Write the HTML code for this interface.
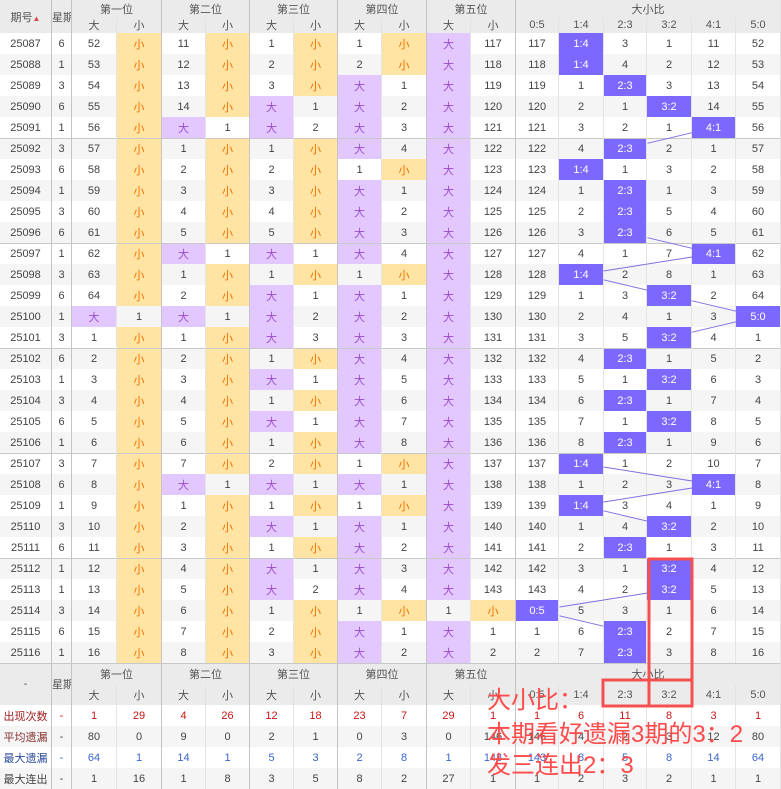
<!DOCTYPE html>
<html><head><meta charset="utf-8">
<style>
html,body{margin:0;padding:0;background:#fff;width:781px;height:789px;overflow:hidden;position:relative}
table{border-collapse:separate;border-spacing:0;table-layout:fixed;width:781px;font-family:"Liberation Sans","Noto Sans CJK SC",sans-serif;font-size:11px;color:#444}
td{padding:0;text-align:center;height:21px;box-sizing:border-box;border-right:1px solid #e4e4e4;white-space:nowrap;overflow:hidden}
tr.e td{background:#f5f5f5}
tr.g td{box-shadow:inset 0 1px 0 #c8c8c8}
td.L{border-right:1px solid #c4c4c4}
td.s{background:#ffe4a3!important;color:#f07000}
td.b{background:#e2c8ff!important;color:#9a4cd0}
td.r{background:#7b68ff!important;color:#fff}
tr.h td{background:#ebebeb;color:#555}
tr.h1 td{height:17px;font-size:11px}
tr.h2 td{height:16px}
tr.f1 td{height:21px}
tr.f2 td{height:21px}
.red td{color:#c81818}
.red td.lab{color:#a02020}
.blu td{color:#3a66cc}
.blu td.lab{color:#2a4a9a}
.avg td.lab{color:#833}
#ov{position:absolute;left:0;top:0;width:781px;height:789px;pointer-events:none}
.ann{position:absolute;left:487px;color:#ff4b4b;font-family:"Liberation Sans","Noto Sans CJK SC",sans-serif;font-size:24px;line-height:31px;white-space:nowrap}
</style></head><body>
<table>
<colgroup><col style="width:52px"><col style="width:20px"><col style="width:45px"><col style="width:45px"><col style="width:44px"><col style="width:44px"><col style="width:44px"><col style="width:44px"><col style="width:44px"><col style="width:45px"><col style="width:44px"><col style="width:45px"><col style="width:43px"><col style="width:45px"><col style="width:43px"><col style="width:45px"><col style="width:44px"><col style="width:45px"></colgroup>
<tr class="h h1"><td rowspan="2" class="L">期号<span style="color:#d44;font-size:8px">▲</span></td><td rowspan="2" class="L">星期</td><td colspan="2" class="L">第一位</td><td colspan="2" class="L">第二位</td><td colspan="2" class="L">第三位</td><td colspan="2" class="L">第四位</td><td colspan="2" class="L">第五位</td><td colspan="6">大小比</td></tr>
<tr class="h h2"><td>大</td><td class="L">小</td><td>大</td><td class="L">小</td><td>大</td><td class="L">小</td><td>大</td><td class="L">小</td><td>大</td><td class="L">小</td><td>0:5</td><td>1:4</td><td>2:3</td><td>3:2</td><td>4:1</td><td>5:0</td></tr>
<tr><td class="L">25087</td><td class="L">6</td><td>52</td><td class="s L">小</td><td>11</td><td class="s L">小</td><td>1</td><td class="s L">小</td><td>1</td><td class="s L">小</td><td class="b">大</td><td class="L">117</td><td>117</td><td class="r">1:4</td><td>3</td><td>1</td><td>11</td><td>52</td></tr>
<tr class="e"><td class="L">25088</td><td class="L">1</td><td>53</td><td class="s L">小</td><td>12</td><td class="s L">小</td><td>2</td><td class="s L">小</td><td>2</td><td class="s L">小</td><td class="b">大</td><td class="L">118</td><td>118</td><td class="r">1:4</td><td>4</td><td>2</td><td>12</td><td>53</td></tr>
<tr><td class="L">25089</td><td class="L">3</td><td>54</td><td class="s L">小</td><td>13</td><td class="s L">小</td><td>3</td><td class="s L">小</td><td class="b">大</td><td class="L">1</td><td class="b">大</td><td class="L">119</td><td>119</td><td>1</td><td class="r">2:3</td><td>3</td><td>13</td><td>54</td></tr>
<tr class="e"><td class="L">25090</td><td class="L">6</td><td>55</td><td class="s L">小</td><td>14</td><td class="s L">小</td><td class="b">大</td><td class="L">1</td><td class="b">大</td><td class="L">2</td><td class="b">大</td><td class="L">120</td><td>120</td><td>2</td><td>1</td><td class="r">3:2</td><td>14</td><td>55</td></tr>
<tr><td class="L">25091</td><td class="L">1</td><td>56</td><td class="s L">小</td><td class="b">大</td><td class="L">1</td><td class="b">大</td><td class="L">2</td><td class="b">大</td><td class="L">3</td><td class="b">大</td><td class="L">121</td><td>121</td><td>3</td><td>2</td><td>1</td><td class="r">4:1</td><td>56</td></tr>
<tr class="e g"><td class="L">25092</td><td class="L">3</td><td>57</td><td class="s L">小</td><td>1</td><td class="s L">小</td><td>1</td><td class="s L">小</td><td class="b">大</td><td class="L">4</td><td class="b">大</td><td class="L">122</td><td>122</td><td>4</td><td class="r">2:3</td><td>2</td><td>1</td><td>57</td></tr>
<tr><td class="L">25093</td><td class="L">6</td><td>58</td><td class="s L">小</td><td>2</td><td class="s L">小</td><td>2</td><td class="s L">小</td><td>1</td><td class="s L">小</td><td class="b">大</td><td class="L">123</td><td>123</td><td class="r">1:4</td><td>1</td><td>3</td><td>2</td><td>58</td></tr>
<tr class="e"><td class="L">25094</td><td class="L">1</td><td>59</td><td class="s L">小</td><td>3</td><td class="s L">小</td><td>3</td><td class="s L">小</td><td class="b">大</td><td class="L">1</td><td class="b">大</td><td class="L">124</td><td>124</td><td>1</td><td class="r">2:3</td><td>1</td><td>3</td><td>59</td></tr>
<tr><td class="L">25095</td><td class="L">3</td><td>60</td><td class="s L">小</td><td>4</td><td class="s L">小</td><td>4</td><td class="s L">小</td><td class="b">大</td><td class="L">2</td><td class="b">大</td><td class="L">125</td><td>125</td><td>2</td><td class="r">2:3</td><td>5</td><td>4</td><td>60</td></tr>
<tr class="e"><td class="L">25096</td><td class="L">6</td><td>61</td><td class="s L">小</td><td>5</td><td class="s L">小</td><td>5</td><td class="s L">小</td><td class="b">大</td><td class="L">3</td><td class="b">大</td><td class="L">126</td><td>126</td><td>3</td><td class="r">2:3</td><td>6</td><td>5</td><td>61</td></tr>
<tr class="g"><td class="L">25097</td><td class="L">1</td><td>62</td><td class="s L">小</td><td class="b">大</td><td class="L">1</td><td class="b">大</td><td class="L">1</td><td class="b">大</td><td class="L">4</td><td class="b">大</td><td class="L">127</td><td>127</td><td>4</td><td>1</td><td>7</td><td class="r">4:1</td><td>62</td></tr>
<tr class="e"><td class="L">25098</td><td class="L">3</td><td>63</td><td class="s L">小</td><td>1</td><td class="s L">小</td><td>1</td><td class="s L">小</td><td>1</td><td class="s L">小</td><td class="b">大</td><td class="L">128</td><td>128</td><td class="r">1:4</td><td>2</td><td>8</td><td>1</td><td>63</td></tr>
<tr><td class="L">25099</td><td class="L">6</td><td>64</td><td class="s L">小</td><td>2</td><td class="s L">小</td><td class="b">大</td><td class="L">1</td><td class="b">大</td><td class="L">1</td><td class="b">大</td><td class="L">129</td><td>129</td><td>1</td><td>3</td><td class="r">3:2</td><td>2</td><td>64</td></tr>
<tr class="e"><td class="L">25100</td><td class="L">1</td><td class="b">大</td><td class="L">1</td><td class="b">大</td><td class="L">1</td><td class="b">大</td><td class="L">2</td><td class="b">大</td><td class="L">2</td><td class="b">大</td><td class="L">130</td><td>130</td><td>2</td><td>4</td><td>1</td><td>3</td><td class="r">5:0</td></tr>
<tr><td class="L">25101</td><td class="L">3</td><td>1</td><td class="s L">小</td><td>1</td><td class="s L">小</td><td class="b">大</td><td class="L">3</td><td class="b">大</td><td class="L">3</td><td class="b">大</td><td class="L">131</td><td>131</td><td>3</td><td>5</td><td class="r">3:2</td><td>4</td><td>1</td></tr>
<tr class="e g"><td class="L">25102</td><td class="L">6</td><td>2</td><td class="s L">小</td><td>2</td><td class="s L">小</td><td>1</td><td class="s L">小</td><td class="b">大</td><td class="L">4</td><td class="b">大</td><td class="L">132</td><td>132</td><td>4</td><td class="r">2:3</td><td>1</td><td>5</td><td>2</td></tr>
<tr><td class="L">25103</td><td class="L">1</td><td>3</td><td class="s L">小</td><td>3</td><td class="s L">小</td><td class="b">大</td><td class="L">1</td><td class="b">大</td><td class="L">5</td><td class="b">大</td><td class="L">133</td><td>133</td><td>5</td><td>1</td><td class="r">3:2</td><td>6</td><td>3</td></tr>
<tr class="e"><td class="L">25104</td><td class="L">3</td><td>4</td><td class="s L">小</td><td>4</td><td class="s L">小</td><td>1</td><td class="s L">小</td><td class="b">大</td><td class="L">6</td><td class="b">大</td><td class="L">134</td><td>134</td><td>6</td><td class="r">2:3</td><td>1</td><td>7</td><td>4</td></tr>
<tr><td class="L">25105</td><td class="L">6</td><td>5</td><td class="s L">小</td><td>5</td><td class="s L">小</td><td class="b">大</td><td class="L">1</td><td class="b">大</td><td class="L">7</td><td class="b">大</td><td class="L">135</td><td>135</td><td>7</td><td>1</td><td class="r">3:2</td><td>8</td><td>5</td></tr>
<tr class="e"><td class="L">25106</td><td class="L">1</td><td>6</td><td class="s L">小</td><td>6</td><td class="s L">小</td><td>1</td><td class="s L">小</td><td class="b">大</td><td class="L">8</td><td class="b">大</td><td class="L">136</td><td>136</td><td>8</td><td class="r">2:3</td><td>1</td><td>9</td><td>6</td></tr>
<tr class="g"><td class="L">25107</td><td class="L">3</td><td>7</td><td class="s L">小</td><td>7</td><td class="s L">小</td><td>2</td><td class="s L">小</td><td>1</td><td class="s L">小</td><td class="b">大</td><td class="L">137</td><td>137</td><td class="r">1:4</td><td>1</td><td>2</td><td>10</td><td>7</td></tr>
<tr class="e"><td class="L">25108</td><td class="L">6</td><td>8</td><td class="s L">小</td><td class="b">大</td><td class="L">1</td><td class="b">大</td><td class="L">1</td><td class="b">大</td><td class="L">1</td><td class="b">大</td><td class="L">138</td><td>138</td><td>1</td><td>2</td><td>3</td><td class="r">4:1</td><td>8</td></tr>
<tr><td class="L">25109</td><td class="L">1</td><td>9</td><td class="s L">小</td><td>1</td><td class="s L">小</td><td>1</td><td class="s L">小</td><td>1</td><td class="s L">小</td><td class="b">大</td><td class="L">139</td><td>139</td><td class="r">1:4</td><td>3</td><td>4</td><td>1</td><td>9</td></tr>
<tr class="e"><td class="L">25110</td><td class="L">3</td><td>10</td><td class="s L">小</td><td>2</td><td class="s L">小</td><td class="b">大</td><td class="L">1</td><td class="b">大</td><td class="L">1</td><td class="b">大</td><td class="L">140</td><td>140</td><td>1</td><td>4</td><td class="r">3:2</td><td>2</td><td>10</td></tr>
<tr><td class="L">25111</td><td class="L">6</td><td>11</td><td class="s L">小</td><td>3</td><td class="s L">小</td><td>1</td><td class="s L">小</td><td class="b">大</td><td class="L">2</td><td class="b">大</td><td class="L">141</td><td>141</td><td>2</td><td class="r">2:3</td><td>1</td><td>3</td><td>11</td></tr>
<tr class="e g"><td class="L">25112</td><td class="L">1</td><td>12</td><td class="s L">小</td><td>4</td><td class="s L">小</td><td class="b">大</td><td class="L">1</td><td class="b">大</td><td class="L">3</td><td class="b">大</td><td class="L">142</td><td>142</td><td>3</td><td>1</td><td class="r">3:2</td><td>4</td><td>12</td></tr>
<tr><td class="L">25113</td><td class="L">1</td><td>13</td><td class="s L">小</td><td>5</td><td class="s L">小</td><td class="b">大</td><td class="L">2</td><td class="b">大</td><td class="L">4</td><td class="b">大</td><td class="L">143</td><td>143</td><td>4</td><td>2</td><td class="r">3:2</td><td>5</td><td>13</td></tr>
<tr class="e"><td class="L">25114</td><td class="L">3</td><td>14</td><td class="s L">小</td><td>6</td><td class="s L">小</td><td>1</td><td class="s L">小</td><td>1</td><td class="s L">小</td><td>1</td><td class="s L">小</td><td class="r">0:5</td><td>5</td><td>3</td><td>1</td><td>6</td><td>14</td></tr>
<tr><td class="L">25115</td><td class="L">6</td><td>15</td><td class="s L">小</td><td>7</td><td class="s L">小</td><td>2</td><td class="s L">小</td><td class="b">大</td><td class="L">1</td><td class="b">大</td><td class="L">1</td><td>1</td><td>6</td><td class="r">2:3</td><td>2</td><td>7</td><td>15</td></tr>
<tr class="e"><td class="L">25116</td><td class="L">1</td><td>16</td><td class="s L">小</td><td>8</td><td class="s L">小</td><td>3</td><td class="s L">小</td><td class="b">大</td><td class="L">2</td><td class="b">大</td><td class="L">2</td><td>2</td><td>7</td><td class="r">2:3</td><td>3</td><td>8</td><td>16</td></tr>
<tr class="h f1 g"><td rowspan="2" class="L">-</td><td rowspan="2" class="L">星期</td><td colspan="2" class="L">第一位</td><td colspan="2" class="L">第二位</td><td colspan="2" class="L">第三位</td><td colspan="2" class="L">第四位</td><td colspan="2" class="L">第五位</td><td colspan="6">大小比</td></tr>
<tr class="h f2"><td>大</td><td class="L">小</td><td>大</td><td class="L">小</td><td>大</td><td class="L">小</td><td>大</td><td class="L">小</td><td>大</td><td class="L">小</td><td>0:5</td><td>1:4</td><td>2:3</td><td>3:2</td><td>4:1</td><td>5:0</td></tr>
<tr class="red"><td class="L lab">出现次数</td><td class="L">-</td><td>1</td><td class="L">29</td><td>4</td><td class="L">26</td><td>12</td><td class="L">18</td><td>23</td><td class="L">7</td><td>29</td><td class="L">1</td><td>1</td><td>6</td><td>11</td><td>8</td><td>3</td><td>1</td></tr>
<tr class="e avg"><td class="L lab">平均遗漏</td><td class="L">-</td><td>80</td><td class="L">0</td><td>9</td><td class="L">0</td><td>2</td><td class="L">1</td><td>0</td><td class="L">3</td><td>0</td><td class="L">146</td><td>146</td><td>4</td><td>2</td><td>3</td><td>12</td><td>80</td></tr>
<tr class="blu"><td class="L lab">最大遗漏</td><td class="L">-</td><td>64</td><td class="L">1</td><td>14</td><td class="L">1</td><td>5</td><td class="L">3</td><td>2</td><td class="L">8</td><td>1</td><td class="L">143</td><td>143</td><td>8</td><td>5</td><td>8</td><td>14</td><td>64</td></tr>
<tr class="e"><td class="L lab">最大连出</td><td class="L">-</td><td>1</td><td class="L">16</td><td>1</td><td class="L">8</td><td>3</td><td class="L">5</td><td>8</td><td class="L">2</td><td>27</td><td class="L">1</td><td>1</td><td>2</td><td>3</td><td>2</td><td>1</td><td>1</td></tr>
</table>
<svg id="ov" width="781" height="789" xmlns="http://www.w3.org/2000/svg">
<g stroke="#7c70e0" stroke-width="1" fill="none">
<line x1="692" y1="132.7" x2="647.5" y2="143.3"/>
<line x1="647.5" y1="237.7" x2="692" y2="248.3"/>
<line x1="692" y1="257" x2="603.5" y2="271"/>
<line x1="603.5" y1="279.8" x2="647.5" y2="290.2"/>
<line x1="691.5" y1="300.7" x2="736.5" y2="311.3"/>
<line x1="736.5" y1="321.7" x2="691.5" y2="332.3"/>
<line x1="603.5" y1="467" x2="692" y2="481"/>
<line x1="692" y1="488" x2="603.5" y2="502"/>
<line x1="603.5" y1="510.8" x2="647.5" y2="521.2"/>
<line x1="647.5" y1="593" x2="559.5" y2="607"/>
<line x1="559.5" y1="615.8" x2="603.5" y2="626.2"/>
</g>
<g stroke="#f55050" stroke-width="3" fill="none">
<rect x="649" y="559" width="43" height="147"/>
<rect x="603" y="680" width="89" height="26"/>
</g>
</svg>
<div class="ann" style="top:685px">大小比：</div>
<div class="ann" style="top:719px">本期看好遗漏3期的3：2</div>
<div class="ann" style="top:750px">发三连出2：3</div>
</body></html>
